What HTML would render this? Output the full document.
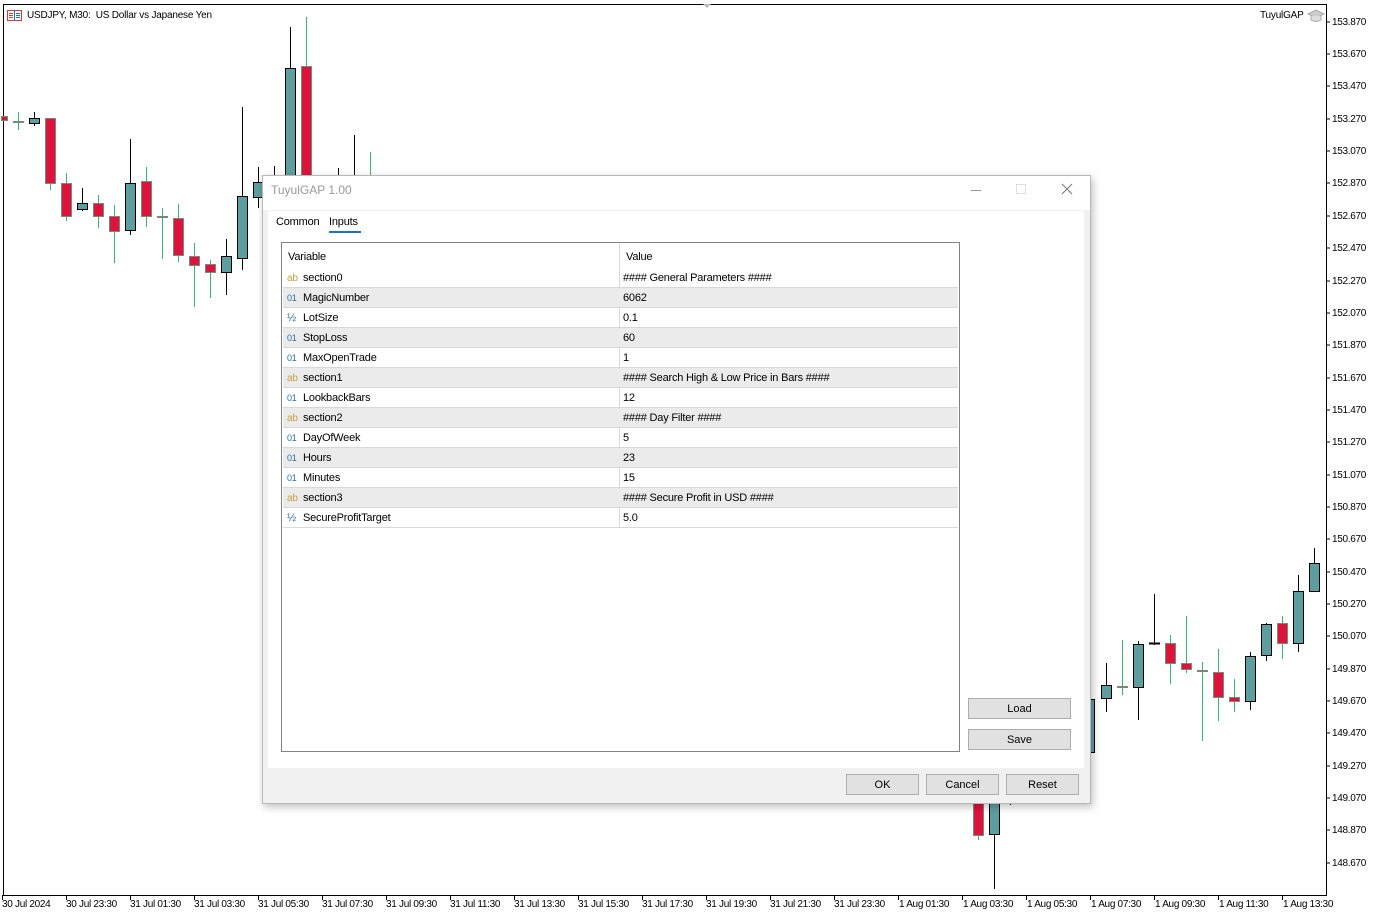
<!DOCTYPE html>
<html><head><meta charset="utf-8"><style>
*{margin:0;padding:0;box-sizing:border-box}
body{width:1380px;height:916px;background:#fff;font-family:"Liberation Sans",sans-serif;font-size:11px;color:#000;position:relative;overflow:hidden}
.abs{position:absolute}
.pl{position:absolute;left:1332px;font-size:10px;line-height:12px;letter-spacing:-0.3px}
.tl{position:absolute;top:899px;font-size:10px;line-height:12px;white-space:nowrap;letter-spacing:-0.3px}
.dlg{position:absolute;left:262px;top:175px;width:829px;height:629px;background:#f0f0f0;border:1px solid #b8b8b8;box-shadow:2px 3px 8px rgba(0,0,0,.25)}
.row{position:absolute;left:1px;width:675px;height:20px;border-bottom:1px solid #d8d8d8;font-size:11px;line-height:21px;letter-spacing:-0.2px}
.row.g{background:#ebebeb}
.row .n{position:absolute;left:20px}
.row .v{position:absolute;left:340px}
.row .i{position:absolute;left:4px;font-size:10px}
.ab{color:#c8a040}.o1{color:#2a6fa8;font-size:9px!important}
.btn{position:absolute;background:#e1e1e1;border:1px solid #adadad;text-align:center;line-height:21px;font-size:11px}
</style></head><body>
<svg class="abs" style="left:0;top:0" width="1380" height="916">
<rect x="3.5" y="4.5" width="1323" height="891" fill="none" stroke="#000"/>
<g stroke-width="1">
<g stroke="#000">
<line x1="1326" y1="22" x2="1330" y2="22"/><line x1="1326" y1="54" x2="1330" y2="54"/><line x1="1326" y1="86" x2="1330" y2="86"/><line x1="1326" y1="119" x2="1330" y2="119"/><line x1="1326" y1="151" x2="1330" y2="151"/><line x1="1326" y1="183" x2="1330" y2="183"/><line x1="1326" y1="216" x2="1330" y2="216"/><line x1="1326" y1="248" x2="1330" y2="248"/><line x1="1326" y1="281" x2="1330" y2="281"/><line x1="1326" y1="313" x2="1330" y2="313"/><line x1="1326" y1="345" x2="1330" y2="345"/><line x1="1326" y1="378" x2="1330" y2="378"/><line x1="1326" y1="410" x2="1330" y2="410"/><line x1="1326" y1="442" x2="1330" y2="442"/><line x1="1326" y1="475" x2="1330" y2="475"/><line x1="1326" y1="507" x2="1330" y2="507"/><line x1="1326" y1="539" x2="1330" y2="539"/><line x1="1326" y1="572" x2="1330" y2="572"/><line x1="1326" y1="604" x2="1330" y2="604"/><line x1="1326" y1="636" x2="1330" y2="636"/><line x1="1326" y1="669" x2="1330" y2="669"/><line x1="1326" y1="701" x2="1330" y2="701"/><line x1="1326" y1="733" x2="1330" y2="733"/><line x1="1326" y1="766" x2="1330" y2="766"/><line x1="1326" y1="798" x2="1330" y2="798"/><line x1="1326" y1="830" x2="1330" y2="830"/><line x1="1326" y1="863" x2="1330" y2="863"/>
<line x1="2.5" y1="895" x2="2.5" y2="900"/><line x1="66.5" y1="895" x2="66.5" y2="900"/><line x1="130.5" y1="895" x2="130.5" y2="900"/><line x1="194.5" y1="895" x2="194.5" y2="900"/><line x1="258.5" y1="895" x2="258.5" y2="900"/><line x1="322.5" y1="895" x2="322.5" y2="900"/><line x1="386.5" y1="895" x2="386.5" y2="900"/><line x1="450.5" y1="895" x2="450.5" y2="900"/><line x1="514.5" y1="895" x2="514.5" y2="900"/><line x1="578.5" y1="895" x2="578.5" y2="900"/><line x1="642.5" y1="895" x2="642.5" y2="900"/><line x1="706.5" y1="895" x2="706.5" y2="900"/><line x1="770.5" y1="895" x2="770.5" y2="900"/><line x1="834.5" y1="895" x2="834.5" y2="900"/><line x1="898.5" y1="895" x2="898.5" y2="900"/><line x1="962.5" y1="895" x2="962.5" y2="900"/><line x1="1026.5" y1="895" x2="1026.5" y2="900"/><line x1="1090.5" y1="895" x2="1090.5" y2="900"/><line x1="1154.5" y1="895" x2="1154.5" y2="900"/><line x1="1218.5" y1="895" x2="1218.5" y2="900"/><line x1="1282.5" y1="895" x2="1282.5" y2="900"/>
</g>
<g stroke="#000">
<line x1="34.5" y1="112" x2="34.5" y2="126"/><line x1="82.5" y1="188" x2="82.5" y2="211"/><line x1="130.5" y1="139" x2="130.5" y2="235"/><line x1="226.5" y1="239" x2="226.5" y2="295"/><line x1="242.5" y1="107" x2="242.5" y2="270"/><line x1="258.5" y1="167" x2="258.5" y2="208"/><line x1="290.5" y1="27" x2="290.5" y2="180"/><line x1="274.5" y1="166" x2="274.5" y2="180"/><line x1="338.5" y1="168" x2="338.5" y2="180"/><line x1="354.5" y1="135" x2="354.5" y2="180"/>
<line x1="994.5" y1="803" x2="994.5" y2="889"/><line x1="1010.5" y1="803" x2="1010.5" y2="805"/><line x1="1106.5" y1="663" x2="1106.5" y2="712"/><line x1="1138.5" y1="641" x2="1138.5" y2="720"/><line x1="1154.5" y1="594" x2="1154.5" y2="645"/><line x1="1250.5" y1="652" x2="1250.5" y2="710"/><line x1="1266.5" y1="623" x2="1266.5" y2="661"/><line x1="1298.5" y1="575" x2="1298.5" y2="652"/><line x1="1314.5" y1="548" x2="1314.5" y2="591"/>
</g>
<g stroke="#3cb371">
<line x1="18.5" y1="112" x2="18.5" y2="130"/><line x1="50.5" y1="118" x2="50.5" y2="190"/><line x1="66.5" y1="173" x2="66.5" y2="221"/><line x1="98.5" y1="195" x2="98.5" y2="228"/><line x1="114.5" y1="205" x2="114.5" y2="263"/><line x1="146.5" y1="167" x2="146.5" y2="227"/><line x1="162.5" y1="208" x2="162.5" y2="259"/><line x1="178.5" y1="204" x2="178.5" y2="262"/><line x1="194.5" y1="243" x2="194.5" y2="307"/><line x1="210.5" y1="260" x2="210.5" y2="298"/><line x1="306.5" y1="17" x2="306.5" y2="180"/><line x1="370.5" y1="152" x2="370.5" y2="180"/>
<line x1="978.5" y1="803" x2="978.5" y2="840"/><line x1="1122.5" y1="640" x2="1122.5" y2="695"/><line x1="1170.5" y1="635" x2="1170.5" y2="684"/><line x1="1186.5" y1="616" x2="1186.5" y2="673"/><line x1="1202.5" y1="662" x2="1202.5" y2="741"/><line x1="1218.5" y1="649" x2="1218.5" y2="721"/><line x1="1234.5" y1="679" x2="1234.5" y2="712"/><line x1="1282.5" y1="616" x2="1282.5" y2="659"/>
</g>
<g fill="#5f9ea0" stroke="#000">
<rect x="29.5" y="118.5" width="10" height="5"/><rect x="77.5" y="203.5" width="10" height="6"/><rect x="125.5" y="183.5" width="10" height="47"/><rect x="221.5" y="256.5" width="10" height="16"/><rect x="237.5" y="196.5" width="10" height="62"/><rect x="253.5" y="182.5" width="10" height="15"/><rect x="285.5" y="68.5" width="10" height="120"/>
<rect x="989.5" y="795.5" width="10" height="39"/><rect x="1086.5" y="699.5" width="8" height="53"/><rect x="1101.5" y="685.5" width="10" height="13"/><rect x="1133.5" y="644.5" width="10" height="43"/><rect x="1149.5" y="643" width="10" height="1"/><rect x="1245.5" y="656.5" width="10" height="45"/><rect x="1261.5" y="624.5" width="10" height="31"/><rect x="1293.5" y="591.5" width="10" height="52"/><rect x="1309.5" y="563.5" width="10" height="28"/>
</g>
<g fill="#dc143c" stroke="#7a8a7a">
<rect x="1.5" y="116.5" width="6" height="4"/><rect x="13.5" y="121.5" width="10" height="1"/><rect x="45.5" y="118.5" width="10" height="65"/><rect x="61.5" y="183.5" width="10" height="33"/><rect x="93.5" y="203.5" width="10" height="13"/><rect x="109.5" y="216.5" width="10" height="15"/><rect x="141.5" y="181.5" width="10" height="35"/><rect x="157.5" y="216.5" width="10" height="1"/><rect x="173.5" y="218.5" width="10" height="37"/><rect x="189.5" y="256.5" width="10" height="9"/><rect x="205.5" y="264.5" width="10" height="8"/><rect x="301.5" y="66.5" width="10" height="122"/>
<rect x="973.5" y="795.5" width="10" height="40"/><rect x="1117.5" y="686.5" width="10" height="1"/><rect x="1165.5" y="643.5" width="10" height="20"/><rect x="1181.5" y="663.5" width="10" height="6"/><rect x="1197.5" y="670.5" width="10" height="1"/><rect x="1213.5" y="672.5" width="10" height="25"/><rect x="1229.5" y="697.5" width="10" height="4"/><rect x="1277.5" y="623.5" width="10" height="20"/>
</g>
</g>
<rect x="7.5" y="10.5" width="14" height="10" fill="none" stroke="#d04040"/>
<line x1="14.5" y1="10" x2="14.5" y2="21" stroke="#2a6fa8"/>
<g stroke="#d04040"><line x1="9" y1="13.5" x2="13" y2="13.5"/><line x1="9" y1="15.5" x2="13" y2="15.5"/><line x1="9" y1="17.5" x2="13" y2="17.5"/></g>
<g stroke="#2a6fa8"><line x1="16" y1="13.5" x2="20" y2="13.5"/><line x1="16" y1="15.5" x2="20" y2="15.5"/><line x1="16" y1="17.5" x2="20" y2="17.5"/></g>
<path d="M1308 14 L1316 10 L1324 14 L1316 18 Z" fill="#ccc" stroke="#aaa"/>
<path d="M1311 16 v4 q5 3 10 0 v-4" fill="#ddd" stroke="#aaa"/>
<path d="M703 4 l4 4 l4 -4" fill="#bbb"/>
</svg>
<div class="abs" style="left:27px;top:10px;font-size:10px;letter-spacing:-0.2px">USDJPY, M30:&nbsp; US Dollar vs Japanese Yen</div>
<div class="abs" style="left:1260px;top:10px;font-size:10px;letter-spacing:-0.2px">TuyulGAP</div>
<div class="pl" style="top:17px">153.870</div><div class="pl" style="top:49px">153.670</div><div class="pl" style="top:81px">153.470</div><div class="pl" style="top:114px">153.270</div><div class="pl" style="top:146px">153.070</div><div class="pl" style="top:178px">152.870</div><div class="pl" style="top:211px">152.670</div><div class="pl" style="top:243px">152.470</div><div class="pl" style="top:276px">152.270</div><div class="pl" style="top:308px">152.070</div><div class="pl" style="top:340px">151.870</div><div class="pl" style="top:373px">151.670</div><div class="pl" style="top:405px">151.470</div><div class="pl" style="top:437px">151.270</div><div class="pl" style="top:470px">151.070</div><div class="pl" style="top:502px">150.870</div><div class="pl" style="top:534px">150.670</div><div class="pl" style="top:567px">150.470</div><div class="pl" style="top:599px">150.270</div><div class="pl" style="top:631px">150.070</div><div class="pl" style="top:664px">149.870</div><div class="pl" style="top:696px">149.670</div><div class="pl" style="top:728px">149.470</div><div class="pl" style="top:761px">149.270</div><div class="pl" style="top:793px">149.070</div><div class="pl" style="top:825px">148.870</div><div class="pl" style="top:858px">148.670</div>
<div class="tl" style="left:2px">30 Jul 2024</div><div class="tl" style="left:66px">30 Jul 23:30</div><div class="tl" style="left:130px">31 Jul 01:30</div><div class="tl" style="left:194px">31 Jul 03:30</div><div class="tl" style="left:258px">31 Jul 05:30</div><div class="tl" style="left:322px">31 Jul 07:30</div><div class="tl" style="left:386px">31 Jul 09:30</div><div class="tl" style="left:450px">31 Jul 11:30</div><div class="tl" style="left:514px">31 Jul 13:30</div><div class="tl" style="left:578px">31 Jul 15:30</div><div class="tl" style="left:642px">31 Jul 17:30</div><div class="tl" style="left:706px">31 Jul 19:30</div><div class="tl" style="left:770px">31 Jul 21:30</div><div class="tl" style="left:834px">31 Jul 23:30</div><div class="tl" style="left:899px">1 Aug 01:30</div><div class="tl" style="left:963px">1 Aug 03:30</div><div class="tl" style="left:1027px">1 Aug 05:30</div><div class="tl" style="left:1091px">1 Aug 07:30</div><div class="tl" style="left:1155px">1 Aug 09:30</div><div class="tl" style="left:1219px">1 Aug 11:30</div><div class="tl" style="left:1283px">1 Aug 13:30</div>

<div class="dlg">
 <div class="abs" style="left:0;top:0;width:827px;height:34px;background:#fff"></div>
 <div class="abs" style="left:8px;top:7px;font-size:12px;color:#999">TuyulGAP 1.00</div>
 <div class="abs" style="left:708px;top:14px;width:10px;height:1px;background:#999"></div>
 <div class="abs" style="left:753px;top:8px;width:10px;height:10px;border:1px solid #ddd"></div>
 <svg class="abs" style="left:798px;top:7px" width="12" height="12"><path d="M1 1L11 11M11 1L1 11" stroke="#777"/></svg>
 <div class="abs" style="left:5px;top:35px;width:816px;height:557px;background:#fff"></div>
 <div class="abs" style="left:13px;top:40px;letter-spacing:-0.2px">Common</div>
 <div class="abs" style="left:66px;top:40px;letter-spacing:-0.2px">Inputs</div>
 <div class="abs" style="left:66px;top:55px;width:32px;height:2px;background:#1a73c8"></div>
 <div class="abs" style="left:18px;top:66px;width:679px;height:510px;border:1px solid #828282;background:#fff">
  <div class="abs" style="left:337px;top:0;width:1px;height:285px;background:#d8d8d8"></div>
  <div class="row" style="top:4px;border:none"><span class="n" style="left:5px">Variable</span><span class="v" style="left:343px">Value</span></div>
  <div class="row" style="top:25px"><span class="i ab">ab</span><span class="n">section0</span><span class="v">#### General Parameters ####</span></div>
  <div class="row g" style="top:45px"><span class="i o1">01</span><span class="n">MagicNumber</span><span class="v">6062</span></div>
  <div class="row" style="top:65px"><span class="i o1" style="font-size:11px!important">½</span><span class="n">LotSize</span><span class="v">0.1</span></div>
  <div class="row g" style="top:85px"><span class="i o1">01</span><span class="n">StopLoss</span><span class="v">60</span></div>
  <div class="row" style="top:105px"><span class="i o1">01</span><span class="n">MaxOpenTrade</span><span class="v">1</span></div>
  <div class="row g" style="top:125px"><span class="i ab">ab</span><span class="n">section1</span><span class="v">#### Search High &amp; Low Price in Bars ####</span></div>
  <div class="row" style="top:145px"><span class="i o1">01</span><span class="n">LookbackBars</span><span class="v">12</span></div>
  <div class="row g" style="top:165px"><span class="i ab">ab</span><span class="n">section2</span><span class="v">#### Day Filter ####</span></div>
  <div class="row" style="top:185px"><span class="i o1">01</span><span class="n">DayOfWeek</span><span class="v">5</span></div>
  <div class="row g" style="top:205px"><span class="i o1">01</span><span class="n">Hours</span><span class="v">23</span></div>
  <div class="row" style="top:225px"><span class="i o1">01</span><span class="n">Minutes</span><span class="v">15</span></div>
  <div class="row g" style="top:245px"><span class="i ab">ab</span><span class="n">section3</span><span class="v">#### Secure Profit in USD ####</span></div>
  <div class="row" style="top:265px"><span class="i o1" style="font-size:11px!important">½</span><span class="n">SecureProfitTarget</span><span class="v">5.0</span></div>
 </div>
 <div class="btn" style="left:705px;top:522px;width:103px;height:21px">Load</div>
 <div class="btn" style="left:705px;top:553px;width:103px;height:21px">Save</div>
 <div class="btn" style="left:583px;top:598px;width:73px;height:21px">OK</div>
 <div class="btn" style="left:663px;top:598px;width:73px;height:21px">Cancel</div>
 <div class="btn" style="left:743px;top:598px;width:73px;height:21px">Reset</div>
</div>
</body></html>
